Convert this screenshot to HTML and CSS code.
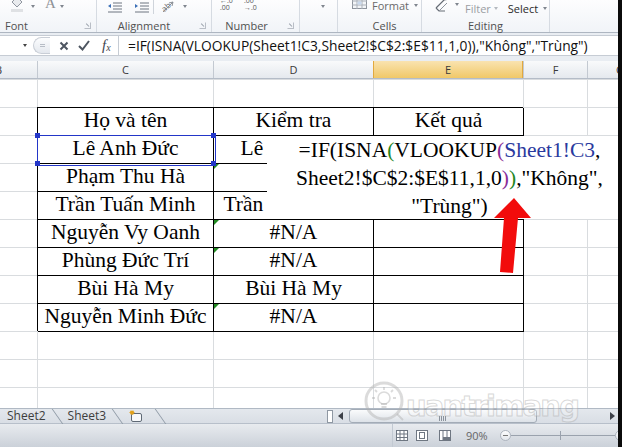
FILE: index.html
```html
<!DOCTYPE html>
<html lang="vi">
<head>
<meta charset="utf-8">
<title>Excel</title>
<link rel="stylesheet" href="styles.css">
</head>
<body>
<div class="app">
  <div class="main">
    <div class="ribbon">
      <div class="grp g-font">
        <div class="icons">
          <svg class="ic bucket" width="14" height="12" viewBox="0 0 14 12"><path d="M2 2 L7 -3 L12 2 L7 7 Z" fill="#e9ebee" stroke="#9096a0"/><path d="M1 9h12v3H1z" fill="#dfe1e4"/></svg>
          <span class="dd d1"></span>
          <span class="fa">A</span>
          <span class="dd d2"></span>
        </div>
        <div class="glabel"><span class="lt">Font</span><i class="launch"></i></div>
      </div>
      <div class="grp g-align">
        <div class="icons">
          <svg class="ic ind1" width="14" height="12" viewBox="0 0 14 12"><path d="M5 1h9M5 4h9M5 7h9M0 10h14" stroke="#6d7480"/><path d="M0 4 L3 2 L3 6 Z" fill="#3a6fb7"/></svg>
          <svg class="ic ind2" width="14" height="12" viewBox="0 0 14 12"><path d="M5 1h9M5 4h9M5 7h9M0 10h14" stroke="#6d7480"/><path d="M3 4 L0 2 L0 6 Z" fill="#3a6fb7"/></svg>
          <span class="vsep"></span>
          <svg class="ic orient" width="16" height="13" viewBox="0 0 16 13"><text x="1" y="9" transform="rotate(-40 7 6)" font-size="8" fill="#6b6b6b" font-family="Open Sans">ab</text><path d="M3 12 L13 2" stroke="#8a8f96"/><path d="M13 2 L9 3 M13 2 L12 6" stroke="#8a8f96"/></svg>
          <span class="dd d3"></span>
        </div>
        <div class="glabel"><span class="lt">Alignment</span><i class="launch"></i></div>
      </div>
      <div class="grp g-num">
        <div class="icons">
          <span class="dec n1"><span>←.0</span><span>.00</span></span>
          <span class="dec n2"><span>.00</span><span>→.0</span></span>
        </div>
        <div class="glabel"><span class="lt">Number</span><i class="launch"></i></div>
      </div>
      <div class="grp g-sty">
        <div class="icons"><span class="dd d4"></span></div>
        <div class="glabel"></div>
      </div>
      <div class="grp g-cells">
        <div class="icons">
          <svg class="ic fmt" width="16" height="12" viewBox="0 0 16 12"><rect x="0.5" y="-3.5" width="14" height="12" fill="#f2f4f7" stroke="#8d939c"/><path d="M0 1h15M0 5h15M5 -3v12M10 -3v12" stroke="#aab0b8"/><rect x="5.5" y="1.5" width="4" height="3" fill="#c9d9ee"/></svg>
          <span class="rtxt fmtx">Format</span>
          <span class="dd d5"></span>
        </div>
        <div class="glabel"><span class="lt">Cells</span></div>
      </div>
      <div class="grp g-edit">
        <div class="icons">
          <svg class="ic eraser" width="16" height="12" viewBox="0 0 16 12"><path d="M1 8 L9 0 L14 -1 M1 8 L4 11 L10 11" fill="none" stroke="#666c75" stroke-width="1.2"/><path d="M4 11 L12 3" stroke="#8d939c"/></svg>
          <span class="dd d6"></span>
          <span class="rtxt filt">Filter</span>
          <span class="dd d7 light"></span>
          <span class="rtxt sel">Select</span>
          <span class="dd d8"></span>
        </div>
        <div class="glabel"><span class="lt">Editing</span></div>
      </div>
      <div class="grp g-rest"></div>
    </div>

    <div class="fwrap">
      <div class="fbar">
        <div class="namebox"><span class="dd nb"></span></div>
        <div class="pill"><span></span></div>
        <svg class="fxbtn xb" width="10" height="10" viewBox="0 0 10 10"><path d="M1.5 1.5 L8.5 8.5 M8.5 1.5 L1.5 8.5" stroke="#4d5560" stroke-width="2"/></svg>
        <svg class="fxbtn ck" width="12" height="11" viewBox="0 0 12 11"><path d="M1 6 L4.5 9.5 L11 1" fill="none" stroke="#4d5560" stroke-width="2"/></svg>
        <span class="fx">f<sub>x</sub></span>
        <div class="ftext">=IF(ISNA(VLOOKUP(Sheet1!C3,Sheet2!$C$2:$E$11,1,0)),"Không","Trùng")</div>
      </div>
    </div>

    <div class="colhead">
      <div class="h hb">B</div>
      <div class="h">C</div>
      <div class="h">D</div>
      <div class="h act">E</div>
      <div class="h">F</div>
      <div class="h hg">G</div>
    </div>

    <div class="sheet">
      <div class="tbl">
        <div class="c">Họ và tên</div><div class="c">Kiểm tra</div><div class="c">Kết quả</div>
        <div class="c selc">Lê Anh Đức</div><div class="c">Lê Anh Đức</div><div class="c"></div>
        <div class="c">Phạm Thu Hà</div><div class="c err">#N/A</div><div class="c"></div>
        <div class="c">Trần Tuấn Minh</div><div class="c">Trần Tuấn Minh</div><div class="c"></div>
        <div class="c">Nguyễn Vy Oanh</div><div class="c err">#N/A</div><div class="c"></div>
        <div class="c">Phùng Đức Trí</div><div class="c err">#N/A</div><div class="c"></div>
        <div class="c">Bùi Hà My</div><div class="c">Bùi Hà My</div><div class="c"></div>
        <div class="c">Nguyễn Minh Đức</div><div class="c err">#N/A</div><div class="c"></div>
      </div>

      <div class="edit">=IF(ISNA<span class="pg">(</span>VLOOKUP<span class="pp">(</span><span class="rb">Sheet1!C3</span>,<br>Sheet2!$C$2:$E$11,1,0<span class="pp">)</span><span class="pg">)</span>,"Không",<br>"Trùng")</div>

      <svg class="arrow" width="618" height="329" viewBox="0 79 618 329"><polygon points="514,198 494,218 504,218 500,272 513,273 518,218 531,218" fill="#f20c0c"/></svg>
    </div>

    <div class="tabs">
      <div class="tablist">
        <span class="tab">Sheet2</span>
        <span class="tab">Sheet3</span>
        <span class="tab newtab"><svg width="15" height="13" viewBox="0 0 15 13"><rect x="3.5" y="3.5" width="10" height="8" rx="1.5" fill="#f7f9fb" stroke="#5f6975"/><path d="M4 0.5 L4 5 M1.5 2.5 L6.5 2.5 M2.3 0.8 L5.7 4.2 M5.7 0.8 L2.3 4.2" stroke="#e2a21c" stroke-width="1.2"/></svg></span>
      </div>
      <div class="hscroll">
        <span class="split"></span>
        <span class="arr l"></span>
        <div class="track"><div class="thumb"><span class="grip"></span></div></div>
        <span class="arr r"></span>
      </div>
    </div>

    <div class="status">
      <div class="sleft"></div>
      <svg class="vi v1" width="12" height="11" viewBox="0 0 12 11"><rect x="0.5" y="0.5" width="11" height="10" fill="#fff" stroke="#6f7782"/><path d="M0 4h12M0 7.5h12M4 0v11M8 0v11" stroke="#6f7782"/></svg>
      <svg class="vi v2" width="12" height="11" viewBox="0 0 12 11"><rect x="0.5" y="0.5" width="11" height="10" fill="#fff" stroke="#6f7782"/><rect x="3.5" y="2.5" width="5" height="6" fill="none" stroke="#6f7782"/></svg>
      <svg class="vi v3" width="12" height="11" viewBox="0 0 12 11"><rect x="0.5" y="0.5" width="11" height="10" fill="#fff" stroke="#6f7782"/><path d="M4 0v11M8 0v7" stroke="#6f7782"/><rect x="4" y="7" width="8" height="4" fill="#6f7782"/></svg>
      <span class="zoomtxt">90%</span>
      <span class="zbtn minus"></span>
      <div class="zline"><span class="tick"></span></div>
      <span class="zbtn plus"></span>
    </div>

    <div class="wm">
      <svg class="wmq" width="42" height="44" viewBox="0 0 42 44"><circle cx="20" cy="21" r="18" fill="none" stroke="rgba(175,175,175,0.45)" stroke-width="3"/><circle cx="20" cy="18" r="6" fill="none" stroke="rgba(175,175,175,0.45)" stroke-width="1.6"/><path d="M17 24h6M17.5 27h5M20 7v3M11 10l2 2M29 10l-2 2M8 18h3M29 18h3M33 34l6 6" stroke="rgba(175,175,175,0.45)" stroke-width="1.8"/></svg>
      <span class="wmt">uantrimang</span>
    </div>
  </div>
  <div class="edge"></div>
</div>
</body>
</html>
```

FILE: styles.css
```css
* { box-sizing: border-box; margin: 0; padding: 0; }
html, body { width: 622px; height: 447px; overflow: hidden; background: #0b0b0b; }
body { font-family: "Open Sans", "Noto Sans", sans-serif; color: #333; }

.app { display: flex; width: 622px; height: 447px; }
.main { width: 618px; height: 447px; background: #fff; display: flex; flex-direction: column; overflow: hidden; position: relative; }
.edge { width: 4px; background: #0b0b0b; }

/* ---------- ribbon ---------- */
.ribbon { height: 33px; flex: none; display: flex; background: linear-gradient(#fdfdfe, #f1f4f8); border-bottom: 1px solid #aeb6c1; }
.grp { display: flex; flex-direction: column; border-right: 1px solid #d6dbe2; flex: none; }
.g-font { width: 97px; }
.g-align { width: 115px; }
.g-num { width: 88px; }
.g-sty { width: 38px; }
.g-cells { width: 84px; }
.g-edit { width: 128px; }
.g-rest { flex: 1; border-right: 0; }
.icons { height: 18px; display: flex; align-items: flex-start; overflow: hidden; }
.glabel { height: 14px; display: flex; align-items: center; font-size: 11px; color: #505050; }
.glabel .lt { flex: 1; text-align: center; }
.g-font .glabel .lt { text-align: left; padding-left: 5px; }
.g-align .glabel .lt { padding-right: 8px; }
.g-num .glabel .lt { padding-right: 6px; }
.g-cells .glabel .lt { padding-left: 10px; }
.launch { width: 7px; height: 7px; margin-right: 5px; border: 1px solid #b9bec6; border-top-color: transparent; border-left-color: transparent; flex: none; position: relative; }
.launch::after { content: ""; position: absolute; right: 1px; bottom: 1px; width: 4px; height: 1px; background: #9aa1ab; transform: rotate(45deg); transform-origin: right; }

.dd { display: inline-block; width: 0; height: 0; border-top: 3px solid #80868f; border-left: 2.5px solid transparent; border-right: 2.5px solid transparent; flex: none; margin-top: 5px; }
.dd.light { border-top-color: #b5b9bf; }
.ic { flex: none; }
.bucket { margin-left: 10px; margin-top: 0; }
.d1 { margin-left: 7px; }
.fa { margin-left: 10px; width: 11px; font-family: "Liberation Serif", serif; font-size: 15px; line-height: 15px; color: #8e9196; margin-top: -4px; }
.d2 { margin-left: 4px; }
.ind1 { margin-left: 11px; margin-top: 2px; }
.ind2 { margin-left: 13px; margin-top: 2px; }
.vsep { width: 1px; height: 14px; background: #cfd4db; margin-left: 4px; flex: none; }
.orient { margin-left: 6px; margin-top: 0; }
.d3 { margin-left: 7px; }
.dec { display: flex; flex-direction: column; font-size: 7px; line-height: 7px; color: #555; margin-top: -3px; width: 18px; flex: none; }
.n1 { margin-left: 8px; }
.n2 { margin-left: 6px; }
.d4 { margin-left: 21px; }
.fmt { margin-left: 14px; }
.rtxt { font-size: 11px; line-height: 12px; flex: none; }
.fmtx { margin-left: 4px; color: #6a6a6a; margin-top: 0; }
.d5 { margin-left: 5px; margin-top: 4px; }
.eraser { margin-left: 13px; }
.d6 { margin-left: 4px; margin-top: 3px; }
.filt { margin-left: 6px; color: #9b9ea3; margin-top: 3px; }
.d7 { margin-left: 3px; margin-top: 7px; }
.sel { margin-left: 10px; color: #2b2b2b; margin-top: 3px; }
.d8 { margin-left: 5px; margin-top: 7px; }

/* ---------- formula bar ---------- */
.fwrap { flex: none; background: #e9edf2; padding: 2px 0 5px; }
.fbar { height: 21px; display: flex; align-items: center; background: #fff; border-top: 1px solid #c6ccd4; border-bottom: 1px solid #c6ccd4; }
.namebox { width: 30px; height: 100%; display: flex; align-items: center; justify-content: flex-end; padding-right: 3px; flex: none; }
.namebox .dd { margin-top: 0; border-top-color: #444; }
.pill { width: 17px; height: 17px; margin-left: 3px; border-radius: 9px 0 0 9px; border: 1px solid #c9ced6; border-right: 0; background: linear-gradient(#fcfdfe, #e4e8ee); display: flex; align-items: center; justify-content: center; flex: none; }
.pill span { width: 5px; height: 3px; border-top: 1px solid #b7bdc6; border-bottom: 1px solid #b7bdc6; }
.xb { margin-left: 9px; flex: none; }
.ck { margin-left: 9px; flex: none; }
.fx { margin-left: 12px; font-family: "Liberation Serif", serif; font-style: italic; font-size: 15px; color: #3f4650; flex: none; width: 16px; }
.fx sub { font-size: 10px; vertical-align: -1px; }
.ftext { margin-left: 0; height: 100%; flex: 1; border-left: 1px solid #c6ccd4; padding-left: 9px; font-size: 13.8px; line-height: 19px; color: #111; white-space: nowrap; overflow: hidden; }

/* ---------- column headers ---------- */
.colhead { flex: none; height: 18px; display: grid; grid-template-columns: 37px 176px 160px 150px 64px 31px; background: linear-gradient(#f9fafb, #e5e9ee); border-bottom: 1px solid #b4bcc7; }
.h { border-left: 1px solid #c3c9d1; font-size: 11px; line-height: 17px; text-align: center; color: #3a3a3a; }
.hb { border-left: 0; text-align: left; text-indent: -5px; }
.hg { text-align: left; padding-left: 28px; }
.act { background: linear-gradient(#f9e3b0, #f1c868); border-left-color: #e2a93f; border-right: 1px solid #e2a93f; }

/* ---------- sheet ---------- */
.sheet { flex: none; height: 329px; position: relative; display: grid; grid-template-columns: 37px 176px 160px 150px 64px 31px; grid-template-rows: repeat(11, 28px) 21px;
  background:
    linear-gradient(to right, transparent 37px, #d9dcdf 37px 38px, transparent 38px 213px, #d9dcdf 213px 214px, transparent 214px 373px, #d9dcdf 373px 374px, transparent 374px 523px, #d9dcdf 523px 524px, transparent 524px 587px, #d9dcdf 587px 588px, transparent 588px),
    repeating-linear-gradient(to bottom, #d9dcdf 0 1px, transparent 1px 28px);
  background-color: #fff; }
.tbl { grid-column: 2 / 5; grid-row: 2 / 10; display: grid; grid-template-columns: 176px 160px 150px; grid-template-rows: repeat(8, 28px); box-shadow: 1px 1px 0 #000; background: #fff; }
.c { box-shadow: inset 1px 1px 0 #000; font-family: "Liberation Serif", "Times New Roman", serif; font-size: 21.5px; line-height: 27px; text-align: center; white-space: nowrap; color: #000; position: relative; padding-left: 1px; }
.selc::after { content: ""; position: absolute; left: 0; top: 0; width: 177px; height: 29px; border: 1px solid #2336c8; z-index: 3; }
.selc::before { content: ""; position: absolute; left: -2px; top: -2px; width: 5px; height: 5px; background: #2336c8; box-shadow: 176px 0 #2336c8, 0 28px #2336c8, 176px 28px #2336c8; z-index: 4; }
.err::before { content: ""; position: absolute; left: 1px; top: 1px; width: 0; height: 0; border-top: 5px solid #228b22; border-right: 5px solid transparent; }

.edit { position: absolute; left: 267px; top: 57px; width: 351px; height: 83px; background: #fff; padding-left: 14px; z-index: 2; font-family: "Liberation Serif", "Times New Roman", serif; font-size: 21.5px; line-height: 28px; text-align: center; white-space: nowrap; color: #000; }
.pg { color: #23861f; }
.pp { color: #8a2e98; }
.rb { color: #2a3a9e; }
.arrow { position: absolute; left: 0; top: 0; z-index: 4; pointer-events: none; }

/* ---------- sheet tabs & scrollbar ---------- */
.tabs { flex: none; height: 16px; display: flex; background: linear-gradient(#e4e8ed, #d9dee5); border-top: 1px solid #b0b9c4; border-bottom: 1px solid #b7bfca; }
.tablist { width: 325px; display: flex; align-items: center; flex: none; }
.tab { font-size: 12px; line-height: 14px; color: #3d3d3d; padding: 0 12px 0 7px; position: relative; }
.tab + .tab { padding-left: 10px; }
.tab::after { content: ""; position: absolute; right: 0; top: 0; height: 15px; width: 1px; background: #8f9aa6; transform: skewX(35deg); }
.newtab { padding: 0 18px 0 8px; display: flex; align-items: center; height: 14px; }
.newtab svg { flex: none; }
.hscroll { flex: 1; display: flex; align-items: center; }
.split { width: 6px; height: 13px; border: 1px solid #8f98a3; background: #fff; margin-left: 2px; flex: none; }
.arr { width: 0; height: 0; border-top: 4px solid transparent; border-bottom: 4px solid transparent; flex: none; }
.arr.l { border-right: 5px solid #3c4048; margin-left: 5px; }
.arr.r { border-left: 5px solid #3c4048; margin-left: 2px; margin-right: 3px; }
.track { flex: 1; height: 14px; margin-left: 6px; }
.thumb { width: 188px; height: 14px; border: 1px solid #a3acb7; border-radius: 3px; background: linear-gradient(#fafbfc, #dde2e8); display: flex; justify-content: center; align-items: center; }
.grip { width: 8px; height: 5px; background: repeating-linear-gradient(to right, #8a929c 0 1px, transparent 1px 2px); margin-top: 4px; }

/* ---------- status bar ---------- */
.status { flex: 1; display: flex; align-items: center; background: linear-gradient(#e8ebef, #cbd1d9); }
.sleft { width: 393px; height: 100%; border-right: 1px solid #c2c9d2; flex: none; }
.vi { flex: none; }
.v1 { margin-left: 3px; }
.v2 { margin-left: 8px; }
.v3 { margin-left: 11px; }
.zoomtxt { margin-left: 15px; font-size: 11px; color: #666; }
.zbtn { width: 11px; height: 11px; border-radius: 50%; border: 1px solid #aeb5bf; background: linear-gradient(#fdfdfe, #e3e7ec); flex: none; position: relative; }
.zbtn::after { content: ""; position: absolute; left: 2px; top: 4px; width: 5px; height: 1px; background: #777; }
.minus { margin-left: 12px; }
.zline { width: 104px; height: 1px; background: #9aa2ad; position: relative; flex: none; }
.tick { position: absolute; left: 49px; top: -4px; width: 1px; height: 9px; background: #9aa2ad; }

/* ---------- watermark ---------- */
.wm { position: absolute; left: 364px; top: 380px; display: flex; align-items: flex-end; z-index: 6; pointer-events: none; }
.wmt { font-family: "DejaVu Sans", sans-serif; font-weight: bold; font-size: 29px; letter-spacing: -1.8px; line-height: 32px; color: rgba(255,255,255,0.25); -webkit-text-stroke: 1.1px rgba(165,165,165,0.42); margin-left: 0; margin-bottom: 2px; }
```
